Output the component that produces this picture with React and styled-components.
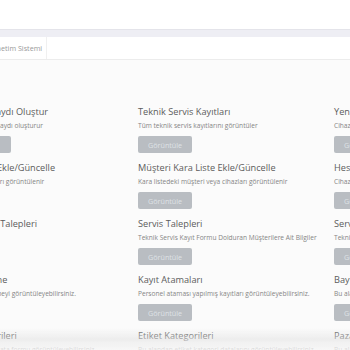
import React from 'react';
import styled, { createGlobalStyle } from 'styled-components';

const GlobalStyle = createGlobalStyle`
  html, body {
    margin: 0;
    padding: 0;
    background: #fbfbfb;
    overflow: hidden;
    font-family: "Open Sans", "Liberation Sans", sans-serif;
  }
`;

const Page = styled.div`
  width: 640px;
  margin-left: -80px;
  min-height: 350px;
`;

const TopSpace = styled.div`
  height: 29px;
  background: #fff;
`;

const Band = styled.div`
  height: 8px;
  background: #eeeef4;
  border-top: 1px solid #e4e4ea;
  box-sizing: border-box;
`;

const TitleBar = styled.div`
  height: 22px;
  background: #fff;
  border-bottom: 1px solid #ececec;
  display: flex;
  align-items: stretch;
`;

const TitleChip = styled.div`
  display: flex;
  align-items: center;
  padding: 0 4px 0 23px;
  border-right: 1px solid #f0f0f0;
  font-size: 7.2px;
  color: #9a9a9a;
`;

const Content = styled.div`
  padding: 45px 0 0 22px;
`;

const Grid = styled.div`
  display: grid;
  grid-template-columns: repeat(3, 180px);
  column-gap: 16px;
  row-gap: 8px;
`;

const Card = styled.div`
  display: flex;
  flex-direction: column;
  align-items: flex-start;
  height: 48px;
`;

const Title = styled.h4`
  margin: 0;
  font-size: 9.2px;
  line-height: 14px;
  font-weight: 400;
  color: #5c5c5c;
  white-space: nowrap;
`;

const Desc = styled.p`
  margin: 2px 0 0;
  font-size: 6.6px;
  line-height: 10px;
  color: #858585;
  white-space: nowrap;
`;

const Button = styled.button`
  margin-top: 5px;
  height: 17px;
  padding: 0 ${({ $wide }) => ($wide ? '13px' : '10px')};
  border: none;
  border-radius: 2px;
  background: #b9bdc2;
  color: #dfe2e6;
  font-family: inherit;
  font-size: 7.2px;
  cursor: pointer;
`;

const Fade = styled.div`
  position: fixed;
  left: 0;
  right: 0;
  bottom: 0;
  height: 22px;
  background: linear-gradient(
    to bottom,
    rgba(250, 250, 250, 0) 0%,
    rgba(226, 226, 226, 0.55) 50%,
    rgba(246, 246, 246, 0.8) 100%
  );
  pointer-events: none;
`;

const items = [
  { title: 'Yeni Servis Kaydı Oluştur', desc: 'Yeni teknik servis kaydı oluşturur', btn: 'Kayıt Oluştur', wide: true },
  { title: 'Teknik Servis Kayıtları', desc: 'Tüm teknik servis kayıtlarını görüntüler' },
  { title: 'Yeni Cihaz Kaydı', desc: 'Cihaz kaydı oluşturur' },
  { title: 'Cihaz Marka Ekle/Güncelle', desc: 'Tüm cihaz markaları görüntülenir' },
  { title: 'Müşteri Kara Liste Ekle/Güncelle', desc: 'Kara listedeki müşteri veya cihazları görüntülenir' },
  { title: 'Hesap Hareketleri', desc: 'Cihaz hesap hareketleri görüntülenir' },
  { title: 'Online Servis Talepleri', desc: 'Online talepler' },
  { title: 'Servis Talepleri', desc: 'Teknik Servis Kayıt Formu Dolduran Müşterilere Ait Bilgiler' },
  { title: 'Servis Kayıt Formu', desc: 'Teknik servis kayıt formu' },
  { title: 'Ödeme Makine', desc: 'Yapılmış tüm ödemeyi görüntüleyebilirsiniz.' },
  { title: 'Kayıt Atamaları', desc: 'Personel ataması yapılmış kayıtları görüntüleyebilirsiniz.' },
  { title: 'Bayi Listesi', desc: 'Bu alandan bayileri görüntüleyebilirsiniz.' },
  { title: 'Cihaz Kategorileri', desc: 'Bu alandan cihaz data formu görüntüleyebilirsiniz.' },
  { title: 'Etiket Kategorileri', desc: 'Bu alandan etiket kategori datalarını görüntüleyebilirsiniz.' },
  { title: 'Pazarlama', desc: 'Bu alandan pazarlama verilerini görüntüleyebilirsiniz.' },
];

export default function App() {
  return (
    <>
      <GlobalStyle />
      <Page>
        <TopSpace />
        <Band />
        <TitleBar>
          <TitleChip>Teknik Servis Yönetim Sistemi</TitleChip>
        </TitleBar>
        <Content>
          <Grid>
            {items.map((item, i) => (
              <Card key={i}>
                <Title>{item.title}</Title>
                <Desc>{item.desc}</Desc>
                <Button $wide={item.wide}>{item.btn || 'Görüntüle'}</Button>
              </Card>
            ))}
          </Grid>
        </Content>
      </Page>
      <Fade />
    </>
  );
}
